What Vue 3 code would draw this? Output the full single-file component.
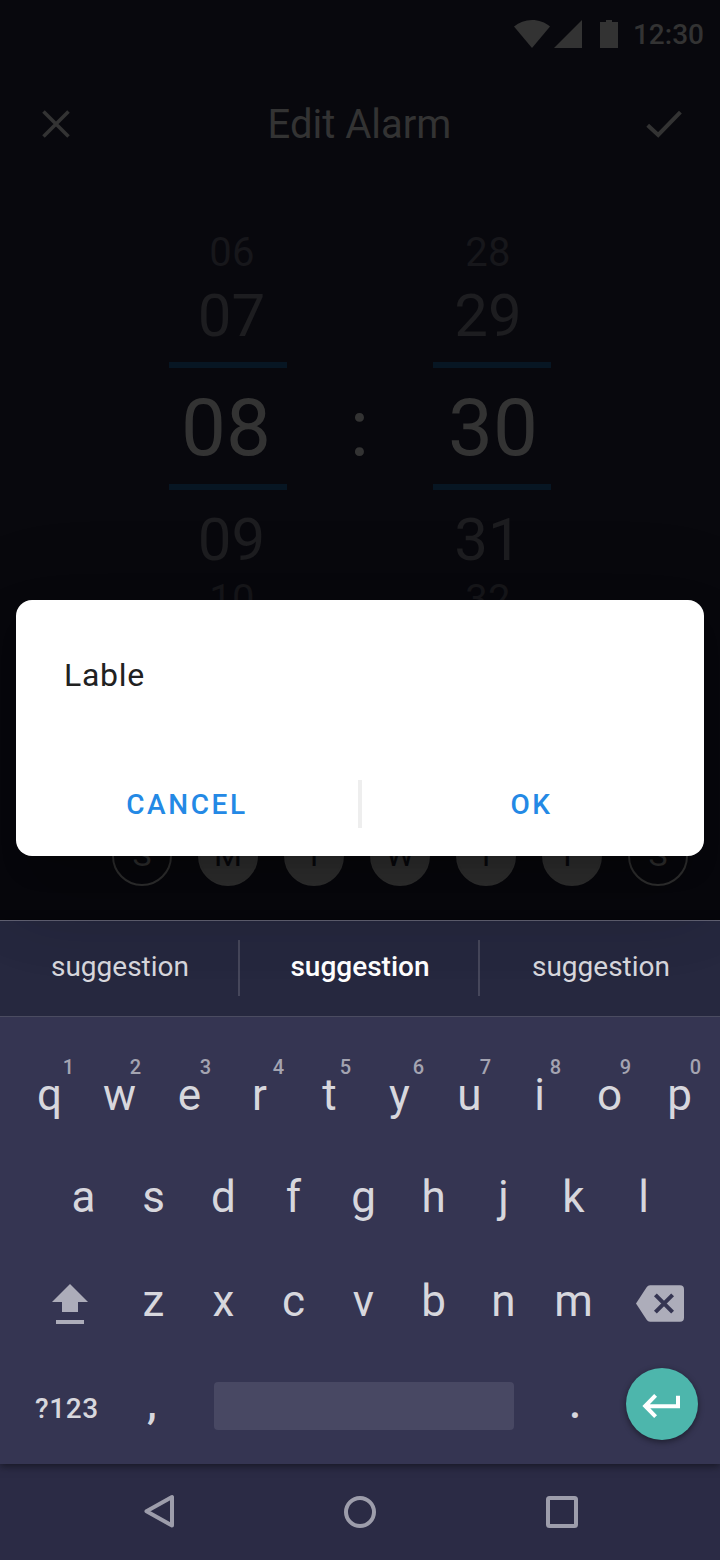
<script setup>
const columns = [
  { id: 'hours', values: ['06', '07', '08', '09', '10'] },
  { id: 'minutes', values: ['28', '29', '30', '31', '32'] },
]
const days = [
  { label: 'S', on: false },
  { label: 'M', on: true },
  { label: 'T', on: true },
  { label: 'W', on: true },
  { label: 'T', on: true },
  { label: 'F', on: true },
  { label: 'S', on: false },
]
const topKeys = [
  { k: 'q', n: '1', wide: true },
  { k: 'w', n: '2' },
  { k: 'e', n: '3' },
  { k: 'r', n: '4', wide: true },
  { k: 't', n: '5' },
  { k: 'y', n: '6', wide: true },
  { k: 'u', n: '7' },
  { k: 'i', n: '8' },
  { k: 'o', n: '9' },
  { k: 'p', n: '0' },
]
const middleKeys = 'asdfghjkl'.split('')
const bottomKeys = 'zxcvbnm'.split('')
</script>

<template>
  <div class="screen">
    <main class="page">
      <div class="status">
        <svg class="status-icons" width="104" height="28" viewBox="0 0 104 28">
          <path d="M0 6.4C5 2.300 11.200 0 18 0s13 2.300 18 6.400L18 28z" />
          <path d="M40 28L68 0v28z" />
          <path d="M86 2h6V0h6v2h6v26H86z" />
        </svg>
        <span class="time">12:30</span>
      </div>
      <header class="bar">
        <svg width="28" height="28" viewBox="0 0 28 28">
          <path d="M1.500 1.500l25 25M26.500 1.500l-25 25" class="line" />
        </svg>
        <h1 class="title">Edit Alarm</h1>
        <svg width="36" height="28" viewBox="0 0 36 28">
          <path d="M1.700 15.300L12.200 25 34.400 2.200" class="line thick" />
        </svg>
      </header>
      <section class="picker">
        <div v-for="c in columns" :key="c.id" class="column" :class="c.id">
          <span class="far">{{ c.values[0] }}</span>
          <span class="near">{{ c.values[1] }}</span>
          <span class="current">{{ c.values[2] }}</span>
          <span class="near after">{{ c.values[3] }}</span>
          <span class="far after">{{ c.values[4] }}</span>
        </div>
        <span class="colon">:</span>
      </section>
      <div class="days">
        <span v-for="(d, i) in days" :key="i" class="day" :class="{ on: d.on }">{{ d.label }}</span>
      </div>
    </main>

    <section class="dialog">
      <div class="field">Lable</div>
      <div class="actions">
        <button class="action">CANCEL</button>
        <i class="split"></i>
        <button class="action confirm">OK</button>
      </div>
    </section>

    <section class="keyboard">
      <div class="suggestions">
        <span class="suggestion">suggestion</span>
        <span class="suggestion main">suggestion</span>
        <span class="suggestion">suggestion</span>
      </div>
      <div class="row first">
        <span v-for="t in topKeys" :key="t.k" class="key">
          <small class="hint" :class="{ wide: t.wide }">{{ t.n }}</small>{{ t.k }}
        </span>
      </div>
      <div class="row second">
        <span v-for="k in middleKeys" :key="k" class="key">{{ k }}</span>
      </div>
      <div class="row third">
        <svg class="shift" width="36" height="40" viewBox="0 0 36 40">
          <path d="M18 0l18 18H26v10H10V18H0zM4 36h28v4H4z" />
        </svg>
        <span v-for="k in bottomKeys" :key="k" class="key">{{ k }}</span>
        <svg class="erase" width="48" height="37" viewBox="0 0 48 37">
          <path class="tag" d="M14 .3H44a4 4 0 0 1 4 4v28.400a4 4 0 0 1-4 4H14q-2 0-3.200-1.700L0 18.500 10.800 2Q12 .3 14 .3z" />
          <path class="cross" d="M19.400 9.900L36.600 27.100M36.600 9.900L19.400 27.100" />
        </svg>
      </div>
      <div class="row fourth">
        <span class="symbols">?123</span>
        <span class="mark comma">,</span>
        <span class="space"></span>
        <span class="mark period">.</span>
        <span class="enter">
          <svg width="40" height="24" viewBox="0 0 40 24">
            <path d="M14.600 1.400L4.200 12 14.600 22.600M4.500 12.200H37V1.800" />
          </svg>
        </span>
      </div>
    </section>

    <nav class="nav">
      <svg width="720" height="96" viewBox="0 0 720 96">
        <path d="M172 33v28.500L146.500 47.300z" />
        <circle cx="360" cy="48" r="14" />
        <rect x="548" y="34" width="28" height="28" rx="1.500" />
      </svg>
    </nav>
  </div>
</template>

<style>
body {
  margin: 0;
  background: #08080d;
}
</style>

<style scoped>
.screen {
  position: relative;
  width: 720px;
  height: 1560px;
  overflow: hidden;
  display: flex;
  flex-direction: column;
  font-family: Roboto, "Liberation Sans", sans-serif;
}
.page {
  height: 920px;
  background: #08080d;
  color: #333;
  display: flex;
  flex-direction: column;
}
.status {
  height: 68px;
  padding-right: 16px;
  display: flex;
  align-items: center;
  justify-content: flex-end;
}
.status-icons {
  fill: #333;
  margin-right: 15px;
}
.time {
  padding-top: 2px;
  font-size: 28px;
  line-height: 34px;
  font-weight: 500;
}
.bar {
  height: 112px;
  padding: 0 38px 0 42px;
  display: flex;
  align-items: center;
  justify-content: space-between;
}
.line {
  fill: none;
  stroke: #333;
  stroke-width: 3.6;
}
.thick {
  stroke-width: 4;
}
.title {
  margin: 0;
  padding: 2px 0 0 3px;
  font-size: 40px;
  line-height: 48px;
  font-weight: 400;
}
.picker {
  height: 440px;
  display: grid;
  grid-template-columns: 118px 146px 118px;
  justify-content: center;
}
.column {
  grid-row: 1;
  padding-top: 53px;
  display: flex;
  flex-direction: column;
  text-align: center;
}
.hours {
  grid-column: 1;
}
.minutes {
  grid-column: 3;
}
.far {
  font-size: 40px;
  line-height: 40px;
  letter-spacing: 0.3px;
  color: #17171b;
}
.near {
  margin: 13px 0 16px;
  font-size: 60px;
  line-height: 60px;
  color: #1d1d20;
}
.near.after {
  margin: 20px 0 10px;
}
.hours .far {
  padding-left: 8px;
}
.hours .near {
  padding-left: 7px;
}
.minutes .far,
.minutes .near {
  padding-right: 8px;
}
.hours .current {
  padding-right: 4px;
}
.minutes .current {
  padding-left: 2px;
}
.current {
  font-size: 80px;
  line-height: 112px;
  padding-top: 4px;
  border-top: 6px solid #071623;
  border-bottom: 6px solid #071623;
}
.colon {
  grid-row: 1;
  grid-column: 2;
  padding: 193px 1px 0 0;
  font-size: 80px;
  line-height: 112px;
  text-align: center;
}
.days {
  margin-top: auto;
  padding: 0 32px 34px 112px;
  display: flex;
  gap: 26px;
}
.day {
  box-sizing: border-box;
  width: 60px;
  height: 60px;
  border: 2px solid #333;
  border-radius: 50%;
  font-size: 32px;
  line-height: 54px;
  text-align: center;
}
.day.on {
  background: #333;
  color: #08080d;
}
.dialog {
  position: absolute;
  left: 16px;
  top: 600px;
  width: 688px;
  height: 256px;
  box-sizing: border-box;
  padding-bottom: 28px;
  display: flex;
  flex-direction: column;
  justify-content: space-between;
  border-radius: 16px;
  background: #fff;
  box-shadow: 0 22px 30px -14px rgba(0, 0, 0, 0.2), 0 48px 76px 6px rgba(0, 0, 0, 0.14),
    0 18px 92px 16px rgba(0, 0, 0, 0.12);
  z-index: 2;
}
.field {
  padding: 55px 48px 0;
  font-size: 32px;
  line-height: 40px;
  letter-spacing: 0.7px;
  color: #212121;
}
.actions {
  display: flex;
  height: 48px;
}
.action {
  box-sizing: border-box;
  flex: none;
  width: 342px;
  padding: 0;
  border: 0;
  background: none;
  font: 500 28px/50px Roboto, "Liberation Sans", sans-serif;
  letter-spacing: 2.6px;
  color: #2489e5;
}
.confirm {
  padding-right: 3px;
}
.split {
  width: 4px;
  background: #eee;
}
.keyboard {
  position: relative;
  height: 544px;
  background: #353552;
  color: #d7d7dd;
  box-shadow: 0 2px 8px rgba(0, 0, 0, 0.5);
  z-index: 1;
}
.suggestions {
  box-sizing: border-box;
  height: 97px;
  border-top: 1px solid #626274;
  border-bottom: 1px solid #4b4c61;
  background: #26283f;
  display: flex;
  padding-top: 19px;
}
.suggestion {
  box-sizing: border-box;
  width: 240px;
  height: 56px;
  padding-left: 2px;
  font-size: 28px;
  line-height: 53px;
  text-align: center;
}
.suggestion:not(:last-child) {
  border-right: 2px solid #46475b;
}
.suggestion.main {
  font-weight: 500;
  color: #fff;
}
.row {
  display: flex;
}
.key {
  flex: none;
  width: 70px;
  font-size: 44px;
  line-height: 52px;
  text-align: center;
}
.first {
  padding: 37px 0 0 14.5px;
}
.hint {
  display: block;
  height: 15px;
  padding-left: 32px;
  font-size: 20px;
  line-height: 26px;
  font-weight: 500;
  color: #a4a4b1;
}
.hint.wide {
  padding-left: 38px;
}
.second {
  padding: 50px 0 0 48.5px;
}
.third {
  padding: 52px 36px 0 52px;
}
.shift {
  flex: none;
  fill: #adadba;
  margin: 9px 30.5px 0 0;
}
.erase {
  flex: none;
  margin: 10px 0 0 27.5px;
}
.tag {
  fill: #adadba;
}
.cross {
  fill: none;
  stroke: #353552;
  stroke-width: 4;
}
.fourth {
  padding: 41px 22px 0 35px;
}
.symbols {
  width: 84px;
  margin-top: 17px;
  font-size: 28px;
  line-height: 48px;
  font-weight: 500;
  letter-spacing: 0.6px;
}
.mark {
  margin-top: 11px;
  font-size: 44px;
  line-height: 48px;
  font-weight: 500;
  text-align: center;
}
.comma {
  width: 66px;
}
.space {
  width: 300px;
  height: 48px;
  margin: 14px 0 0 29px;
  border-radius: 4px;
  background: #484863;
}
.period {
  width: 64px;
  margin: 11px 19px 0 29px;
}
.enter {
  width: 72px;
  height: 72px;
  border-radius: 50%;
  background: #4db6ac;
  box-shadow: 0 2px 6px rgba(0, 0, 0, 0.45);
  display: flex;
  align-items: center;
  justify-content: center;
}
.enter svg {
  margin: 3px 2px 0 0;
}
.enter path {
  fill: none;
  stroke: #fff;
  stroke-width: 4;
}
.nav {
  height: 96px;
  background: #2b2b45;
}
.nav svg {
  display: block;
  fill: none;
  stroke: #9d9dab;
  stroke-width: 4;
  stroke-linejoin: round;
}
</style>
